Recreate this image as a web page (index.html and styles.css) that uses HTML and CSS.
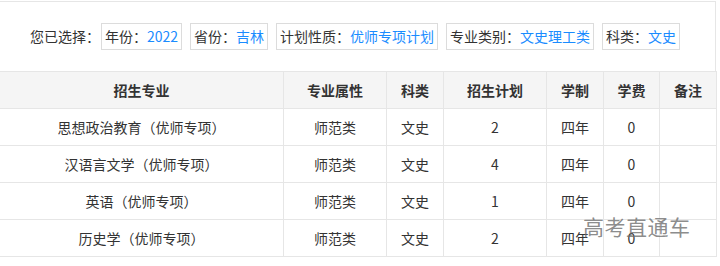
FILE: index.html
```html
<!DOCTYPE html>
<html lang="zh-CN">
<head>
<meta charset="utf-8">
<title>招生计划</title>
<link rel="stylesheet" href="styles.css">
</head>
<body>
<div class="panel">
  <div class="filter">
    <span class="filter-label">您已选择：</span>
    <span class="tag">年份：<em>2022</em></span>
    <span class="tag">省份：<em>吉林</em></span>
    <span class="tag">计划性质：<em>优师专项计划</em></span>
    <span class="tag">专业类别：<em>文史理工类</em></span>
    <span class="tag">科类：<em>文史</em></span>
  </div>
  <table class="plan">
    <colgroup>
      <col class="c-major"><col class="c-attr"><col class="c-sub"><col class="c-plan"><col class="c-sub"><col class="c-fee"><col class="c-sub">
    </colgroup>
    <thead>
      <tr><th>招生专业</th><th>专业属性</th><th>科类</th><th>招生计划</th><th>学制</th><th>学费</th><th>备注</th></tr>
    </thead>
    <tbody>
      <tr><td>思想政治教育（优师专项）</td><td>师范类</td><td>文史</td><td>2</td><td>四年</td><td>0</td><td></td></tr>
      <tr><td>汉语言文学（优师专项）</td><td>师范类</td><td>文史</td><td>4</td><td>四年</td><td>0</td><td></td></tr>
      <tr><td>英语（优师专项）</td><td>师范类</td><td>文史</td><td>1</td><td>四年</td><td>0</td><td></td></tr>
      <tr><td>历史学（优师专项）</td><td>师范类</td><td>文史</td><td>2</td><td>四年</td><td>0</td><td></td></tr>
    </tbody>
  </table>
  <div class="watermark">高考直通车</div>
</div>
</body>
</html>
```
FILE: styles.css
```css
html, body {
  margin: 0;
  padding: 0;
  background: #fff;
}
body {
  font-family: "Noto Sans CJK SC", "Noto Sans", sans-serif;
  font-size: 14px;
  color: #333;
}
.panel {
  position: relative;
  margin: 1px 0 0 -1px;
  width: 717px;
  border-top: 1px solid #e6e6e6;
}
.filter {
  box-sizing: border-box;
  height: 69px;
  display: flex;
  align-items: center;
  padding-left: 31px;
  border-right: 1px solid #e6e6e6;
  line-height: 25px;
}
.filter-label {
  margin-right: 1px;
}
.tag {
  border: 1px solid #dcdcdc;
  padding: 0 3px;
  margin-right: 8px;
  white-space: nowrap;
}
.tag em {
  font-style: normal;
  color: #1a8cff;
}
.plan {
  width: 717px;
  table-layout: fixed;
  border-collapse: collapse;
}
.c-major { width: 284px; }
.c-attr { width: 103px; }
.c-plan { width: 103px; }
.c-sub { width: 57px; }
.c-fee { width: 56px; }
.plan th, .plan td {
  border: 1px solid #e6e6e6;
  height: 36px;
  padding: 0;
  text-align: center;
  vertical-align: middle;
  line-height: 20px;
}
.plan th {
  background: #f5f5f5;
  font-weight: bold;
  color: #333;
}
.watermark {
  position: absolute;
  left: 584px;
  top: 211px;
  font-size: 21px;
  line-height: 26px;
  letter-spacing: 0.5px;
  color: rgba(110, 110, 110, 0.8);
}
```
